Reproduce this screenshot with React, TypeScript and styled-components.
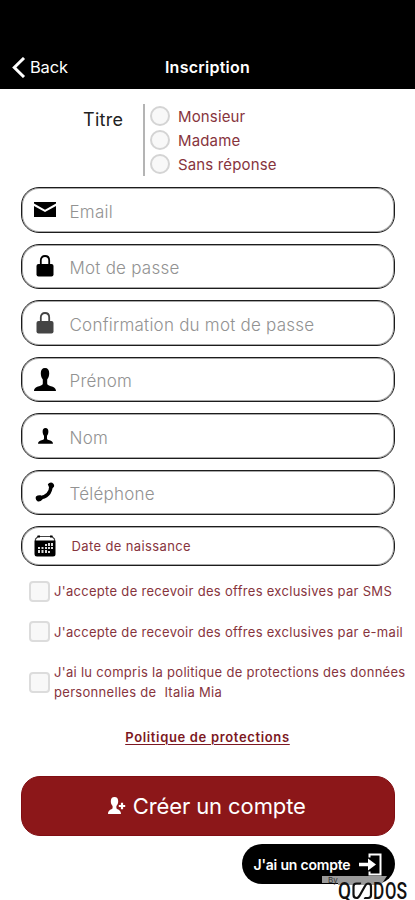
import React from "react";
import styled, { createGlobalStyle } from "styled-components";

const wine = "#87343d";

const GlobalStyle = createGlobalStyle`
  * { box-sizing: border-box; }
  body { margin: 0; background: #fff; font-family: Inter, "Liberation Sans", sans-serif; }
`;

const Screen = styled.main`
  width: 415px;
  height: 900px;
  overflow: hidden;
  background: #fff;
  display: flex;
  flex-direction: column;
`;

const Header = styled.header`
  height: 88.5px;
  flex: none;
  background: #000;
  color: #fff;
  padding: 46px 12px 0;
  display: grid;
  grid-template-columns: 100px 1fr 100px;
  align-items: center;
`;

const Back = styled.a`
  display: flex;
  align-items: center;
  gap: 4px;
  font-size: 16.5px;
  letter-spacing: -0.2px;
`;

const Title = styled.h1`
  margin: 0;
  text-align: center;
  font-size: 16px;
  font-weight: 600;
  letter-spacing: 0.25px;
`;

const TitleChoice = styled.section`
  display: flex;
  height: 72px;
  flex: none;
  margin: 15.5px 0 11px 83px;
`;

const ChoiceLabel = styled.div`
  width: 60px;
  padding-top: 5px;
  font-size: 18px;
  line-height: 22px;
  letter-spacing: 0.3px;
  color: #222;
`;

const Options = styled.div`
  border-left: 2px solid #b4b4b4;
  padding-left: 5px;
`;

const Option = styled.label`
  display: flex;
  align-items: center;
  gap: 8px;
  height: 24.2px;
  font-size: 15px;
  letter-spacing: 0.15px;
  color: ${wine};
`;

const Radio = styled.span`
  width: 20px;
  height: 20px;
  border: 2px solid #d4d4d4;
  border-radius: 50%;
  background: #f8f8f8;
`;

const Fields = styled.section`
  display: flex;
  flex-direction: column;
  gap: 11px;
  padding: 0 20.5px 0 21px;
`;

const Field = styled.div<{ $short?: boolean }>`
  height: ${(p) => (p.$short ? 39.5 : 45.5)}px;
  border: 1px solid #1c1c1c;
  box-shadow: inset 0 0 0 1px #a8a8a8;
  border-radius: 18px;
  display: flex;
  align-items: center;
  padding-left: 11px;
`;

const IconSlot = styled.span`
  width: 24px;
  height: 28px;
  display: flex;
  align-items: center;
  justify-content: center;
  margin-right: 12.5px;
`;

const Placeholder = styled.span`
  font-size: 17px;
  font-weight: 300;
  color: #929292;
  letter-spacing: 0.23px;
  padding-top: 4px;
`;

const DateText = styled.span`
  margin-left: 2px;
  font-size: 13px;
  letter-spacing: 0.38px;
  color: ${wine};
`;

const Consents = styled.section`
  display: flex;
  flex-direction: column;
  padding: 5.5px 0 0 28.5px;
`;

const Consent = styled.label<{ $height: number }>`
  display: flex;
  align-items: center;
  gap: 4.5px;
  height: ${(p) => p.$height}px;
  font-size: 13px;
  line-height: 20.5px;
  letter-spacing: 0.3px;
  color: ${wine};
  white-space: pre;
`;

const Checkbox = styled.span`
  width: 21px;
  height: 21px;
  flex: none;
  border: 2px solid #dcdcdc;
  border-radius: 4px;
  background: #f8f8f8;
`;

const PolicyLink = styled.a`
  align-self: center;
  margin-top: 14.5px;
  height: 20px;
  flex: none;
  font-size: 13px;
  line-height: 20px;
  font-weight: 600;
  letter-spacing: 0.66px;
  color: #7c1822;
  text-decoration: underline;
  text-decoration-thickness: 1px;
  text-underline-offset: 2px;
`;

const CreateButton = styled.button`
  margin: 29px 20.5px 0 21px;
  height: 60px;
  flex: none;
  border: 1px solid #800d12;
  border-radius: 19px;
  background: #8c1719;
  color: #fff;
  font-family: inherit;
  font-size: 22px;
  letter-spacing: -0.1px;
  display: flex;
  align-items: center;
  justify-content: center;
  gap: 7px;
  padding: 0 2px 0 0;
`;

const Bottom = styled.footer`
  position: relative;
  display: flex;
  justify-content: flex-end;
  padding: 8px 20.5px 0 0;
  flex: 1;
`;

const LoginButton = styled.button`
  width: 153px;
  height: 40px;
  border: 0;
  border-radius: 20px;
  background: #000;
  color: #fff;
  font-family: inherit;
  font-size: 14px;
  font-weight: 600;
  letter-spacing: -0.2px;
  white-space: nowrap;
  display: flex;
  align-items: center;
  gap: 9px;
  padding: 0 0 0 12px;
`;

const Watermark = styled.svg`
  position: absolute;
  left: 320px;
  bottom: 0;
`;

const Mail = () => (
  <svg width="22" height="16" viewBox="0 0 22 16">
    <path d="M0 0h22v1.600L11 7.800 0 1.600zM0 4l11 6 11-6v11H0z" fill="#000" />
  </svg>
);

const Lock = ({ fill }: { fill: string }) => (
  <svg width="18" height="22" viewBox="0 0 18 22">
    <path d="M4.800 10V5.500C4.800 2.500 6.500 1 9 1s4.200 1.500 4.200 4.500V10" fill="none" stroke={fill} strokeWidth="1.800" />
    <rect x="0.500" y="9" width="17" height="12.500" rx="2" fill={fill} />
  </svg>
);

const Person = ({ size }: { size: number }) => (
  <svg width={size} height={size * 1.05} viewBox="0 0 22 23">
    <path
      d="M11 0c2.900 0 4.200 2 4.200 5.200 0 3-.9 4.800-2 6.200v4c0 1.200.8 1.600 2.400 2.200 3.500 1.100 6.400 1.800 6.400 5.400H0c0-3.600 2.900-4.300 6.400-5.400 1.600-.6 2.400-1 2.400-2.200v-4c-1.100-1.400-2-3.200-2-6.200C6.800 2 8.100 0 11 0z"
      fill="#000"
    />
  </svg>
);

const Phone = () => (
  <svg width="20" height="20" viewBox="0 0 20 20">
    <path d="M16 3.500Q15.800 14.800 3.500 16.300" fill="none" stroke="#000" strokeWidth="3.400" />
    <path d="M12.800 2.200Q14.500 0 17.200.7 20 2.500 18.800 5 17 7 14.500 6.400zM1 14.500Q3 12.700 5.800 13.300L7.500 17.500Q5.500 20 2.800 19.500-.2 17.500 1 14.500z" fill="#000" />
  </svg>
);

const Calendar = () => (
  <svg width="22" height="22" viewBox="0 0 22 22">
    <path d="M1.500 6V4L4 1.500h14L20.500 4v2" fill="#fff" stroke="#444" strokeWidth="1.200" />
    <path d="M3.500 1.500h2.500M16 1.500h2.500" stroke="#000" strokeWidth="2" />
    <path d="M.5 5.500h21V19q0 2.500-2.500 2.500H3Q.5 21.500.5 19z" fill="#000" />
    <path
      d="M11 9h2v2h-2zM14 8h2v3h-2zM17 8h2v3h-2zM4 12h2v2H4zM7.500 12h2v2h-2zM11 12h2v2h-2zM14 12h2v2h-2zM17 12h2v2h-2zM4 15h2v3H4zM7.500 15h2v3h-2zM11 15h2v3h-2zM14 16h2v2h-2z"
      fill="#ddd"
    />
  </svg>
);

const Chevron = () => (
  <svg width="14" height="21" viewBox="0 0 14 21">
    <path d="M12 1L2.300 10.500 12 20" fill="none" stroke="#fff" strokeWidth="3" />
  </svg>
);

const AddPerson = () => (
  <svg width="18" height="18" viewBox="0 0 18 18">
    <path d="M6.500 0c2.500 0 3.700 1.600 3.700 4.200 0 2-.7 3.600-1.800 4.700v2.300c1 1.500 4.600 1.400 4.600 5.800H0c0-4.400 3.600-4.300 4.600-5.800V8.900C3.500 7.800 2.800 6.200 2.800 4.200 2.800 1.600 4 0 6.500 0z" fill="#fff" />
    <path d="M14 5.500v7M10.500 9h7" stroke="#8c1719" strokeWidth="4" />
    <path d="M14 5.800v6.400M10.800 9h6.400" stroke="#fff" strokeWidth="2.200" />
  </svg>
);

const Enter = () => (
  <svg width="23" height="23" viewBox="0 0 23 23">
    <path d="M10.500 4.500V1.500h11v20h-11V18.500" fill="none" stroke="#fff" strokeWidth="2" />
    <path d="M0 9.800h9V5.500l8 6-8 6v-4.300H0z" fill="#fff" />
  </svg>
);

const fields = [
  { label: "Email", icon: <Mail /> },
  { label: "Mot de passe", icon: <Lock fill="#000" /> },
  { label: "Confirmation du mot de passe", icon: <Lock fill="#444" /> },
  { label: "Prénom", icon: <Person size={22} /> },
  { label: "Nom", icon: <Person size={15} /> },
  { label: "Téléphone", icon: <Phone /> },
];

export default function App() {
  return (
    <>
      <GlobalStyle />
      <Screen>
        <Header>
          <Back><Chevron />Back</Back>
          <Title>Inscription</Title>
        </Header>
        <TitleChoice>
          <ChoiceLabel>Titre</ChoiceLabel>
          <Options>
            {["Monsieur", "Madame", "Sans réponse"].map((name) => (
              <Option key={name}><Radio />{name}</Option>
            ))}
          </Options>
        </TitleChoice>
        <Fields>
          {fields.map((f) => (
            <Field key={f.label}>
              <IconSlot>{f.icon}</IconSlot>
              <Placeholder>{f.label}</Placeholder>
            </Field>
          ))}
          <Field $short>
            <IconSlot><Calendar /></IconSlot>
            <DateText>Date de naissance</DateText>
          </Field>
        </Fields>
        <Consents>
          <Consent $height={40.5}><Checkbox />J'accepte de recevoir des offres exclusives par SMS</Consent>
          <Consent $height={40.5}><Checkbox />J'accepte de recevoir des offres exclusives par e-mail</Consent>
          <Consent $height={60.5}><Checkbox />{"J'ai lu compris la politique de protections des données\npersonnelles de  Italia Mia"}</Consent>
        </Consents>
        <PolicyLink>Politique de protections</PolicyLink>
        <CreateButton><AddPerson />Créer un compte</CreateButton>
        <Bottom>
          <LoginButton>J'ai un compte<Enter /></LoginButton>
          <Watermark width="90" height="25" viewBox="0 0 90 25">
            <path d="M2 1h65l-6 9H18v-2H2z" fill="#9a9a9a" />
            <text x="8" y="8" fontSize="8" fill="#333">By</text>
            <g fontFamily="Roboto, sans-serif" fontSize="23" fontWeight="500" fill="#111">
              <text transform="translate(18 23.800) scale(0.820 1)">Q</text>
              <text transform="translate(53 23.800) scale(0.750 1)">D</text>
              <text transform="translate(65 23.800) scale(0.720 1)">O</text>
              <text transform="translate(76.500 23.800) scale(0.760 1)">S</text>
            </g>
            <path d="M40 9.200V8.500H36.500Q33.500 8.500 33.500 11.500v8q0 3.500 3 3.500 2 0 3.500-3l5-9q1.300-2.500 3-2.500 3 0 3 3v8.500q0 3-3 3H45V22.500" fill="none" stroke="#111" strokeWidth="2.200" />
          </Watermark>
        </Bottom>
      </Screen>
    </>
  );
}
